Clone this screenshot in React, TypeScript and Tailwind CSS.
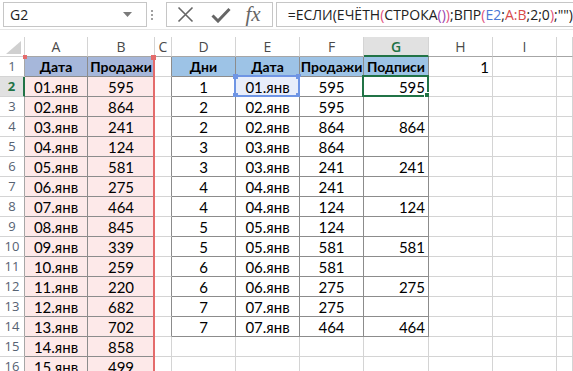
import React from "react";

type Col = { key: string; w: string };

const COLS: Col[] = [
  { key: "A", w: "w-[63px]" },
  { key: "B", w: "w-[67px]" },
  { key: "C", w: "w-[17px]" },
  { key: "D", w: "w-[64px]" },
  { key: "E", w: "w-[64px]" },
  { key: "F", w: "w-[64px]" },
  { key: "G", w: "w-[65px]" },
  { key: "H", w: "w-[64px]" },
  { key: "I", w: "w-[64px]" },
  { key: "J", w: "flex-1" },
];

const SALES = [595, 864, 241, 124, 581, 275, 464, 845, 339, 259, 220, 682, 702, 858, 499];
const dd = (i: number) => `${String(i).padStart(2, "0")}.янв`;

// вторая таблица: D..G, строки 2..14
const RIGHT: [number, string, number, string][] = [
  [1, dd(1), 595, "595"],
  [2, dd(2), 595, ""],
  [2, dd(2), 864, "864"],
  [3, dd(3), 864, ""],
  [3, dd(3), 241, "241"],
  [4, dd(4), 241, ""],
  [4, dd(4), 124, "124"],
  [5, dd(5), 124, ""],
  [5, dd(5), 581, "581"],
  [6, dd(6), 581, ""],
  [6, dd(6), 275, "275"],
  [7, dd(7), 275, ""],
  [7, dd(7), 464, "464"],
];

const ROWS = 16;

const inTable = (r: number, c: number) =>
  (c >= 0 && c <= 1 && r >= 1 && r <= ROWS) || (c >= 3 && c <= 6 && r >= 1 && r <= 14);

type Val = { text: string; bold?: boolean; align?: "center" | "right" };

const value = (r: number, c: number): Val => {
  if (r === 1) {
    const heads = ["Дата", "Продажи", "", "Дни", "Дата", "Продажи", "Подписи", "1"];
    if (c === 7) return { text: "1", align: "right" };
    return { text: heads[c] ?? "", bold: true };
  }
  if (c === 0) return { text: dd(r - 1) };
  if (c === 1) return { text: String(SALES[r - 2]) };
  const row = RIGHT[r - 2];
  if (row && c >= 3 && c <= 6) {
    const v = row[c - 3];
    return { text: String(v), align: c === 6 ? "right" : "center" };
  }
  return { text: "" };
};

const fillOf = (r: number, c: number) => {
  if (r === 1 && c <= 1) return "bg-[#a6b7da]";
  if (r === 1 && c >= 3 && c <= 6) return "bg-[#9dc3e6]";
  if (r === 2 && c === 4) return "bg-[#e8eefb]";
  if (c <= 1) return "bg-[#fde9e9]";
  return "bg-white";
};

const Cell = ({ r, c }: { r: number; c: number }) => {
  const v = value(r, c);
  const darkR = inTable(r, c) || inTable(r, c + 1);
  const darkB = inTable(r, c) || inTable(r + 1, c);
  return (
    <div
      className={`relative flex h-[20px] shrink-0 items-center border-r border-b px-[3px] pt-[1px] ${COLS[c].w} ${fillOf(r, c)} ${
        darkR ? "border-r-[#8c8c8c]" : "border-r-[#d4d4d4]"
      } ${darkB ? "border-b-[#8c8c8c]" : "border-b-[#d4d4d4]"} ${
        v.align === "right" ? "justify-end" : "justify-center"
      }`}
    >
      <span className={`whitespace-nowrap leading-none text-black ${v.bold ? "text-[14px] font-bold" : ""}`}>{v.text}</span>

      {/* диапазон E2 — синяя рамка */}
      {r === 2 && c === 4 && (
        <div className="absolute -left-[2px] -top-[2px] -right-[1px] -bottom-[1px] border-2 border-[#6f95e4]">
          <span className="absolute -left-[3px] -top-[3px] h-[5px] w-[5px] bg-[#6f95e4]" />
          <span className="absolute -right-[3px] -top-[3px] h-[5px] w-[5px] bg-[#6f95e4]" />
          <span className="absolute -left-[3px] -bottom-[3px] h-[5px] w-[5px] bg-[#6f95e4]" />
          <span className="absolute -right-[3px] -bottom-[3px] h-[5px] w-[5px] bg-[#6f95e4]" />
        </div>
      )}

      {/* активная ячейка G2 */}
      {r === 2 && c === 6 && (
        <div className="absolute -left-[2px] -top-[2px] -right-[1px] -bottom-[1px] border-2 border-[#217346]">
          <span className="absolute -right-[4px] -bottom-[4px] box-content h-[5px] w-[5px] border border-white bg-[#217346]" />
        </div>
      )}
    </div>
  );
};

const RowHeader = ({ r }: { r: number }) => {
  const sel = r === 2;
  return (
    <div
      className={`flex h-[20px] w-[25px] shrink-0 items-center justify-center border-b border-b-[#d4d4d4] text-[13px] font-['Open_Sans',sans-serif] ${
        sel
          ? "border-r-2 border-r-[#217346] bg-[#e1e1e1] font-bold text-[#217346]"
          : "border-r border-r-[#a6a6a6] bg-white text-[#566273]"
      }`}
    >
      {r}
    </div>
  );
};

const FormulaBar = () => (
  <div className="flex h-[30px] items-start border-b border-[#e6e6e6] pt-[2px]">
    {/* Name box */}
    <div className="ml-[3px] flex h-[25px] w-[149px] items-center justify-between border border-[#c6c6c6] pl-[6px] pr-[14px]">
      <span className="text-[14px] text-[#222] font-['Open_Sans',sans-serif]">G2</span>
      <svg width="9" height="5" viewBox="0 0 9 5">
        <polygon points="0,0 9,0 4.5,5" fill="#7a7a7a" />
      </svg>
    </div>
    <div className="flex h-[25px] w-[20px] flex-col items-start justify-center gap-[2px] pl-[4px]">
      <span className="h-[2px] w-[2px] bg-[#a0a0a0]" />
      <span className="h-[2px] w-[2px] bg-[#a0a0a0]" />
      <span className="h-[2px] w-[2px] bg-[#a0a0a0]" />
    </div>
    {/* Кнопки */}
    <div className="flex h-[25px] w-[110px] items-center border border-[#c6c6c6] pl-[10px]">
      <svg width="17" height="17" viewBox="0 0 17 17" className="mr-[17px]">
        <path d="M1.5 1.5 L15.5 15.5 M15.5 1.5 L1.5 15.5" stroke="#666" strokeWidth="1.6" fill="none" />
      </svg>
      <svg width="20" height="16" viewBox="0 0 20 16" className="mr-[14px]">
        <path d="M1.5 8.5 L7 14 L18.5 2" stroke="#666" strokeWidth="3" fill="none" />
      </svg>
      <span className="text-[21px] italic leading-none text-[#666] font-['Liberation_Serif',serif]">fx</span>
    </div>
    {/* Строка формул */}
    <div className="ml-[3px] flex h-[25px] flex-1 items-center whitespace-nowrap border border-r-0 border-[#c6c6c6] pl-[11px] text-[14px] text-[#222] font-['Open_Sans',sans-serif]">
      <span>=ЕСЛИ(ЕЧЁТН</span>
      <span className="text-[#e0507c]">(</span>
      <span>СТРОКА</span>
      <span className="text-[#9a3fb0]">()</span>
      <span className="text-[#e0507c]">)</span>
      <span>;ВПР</span>
      <span className="text-[#e0507c]">(</span>
      <span className="text-[#4a78d6]">E2</span>
      <span>;</span>
      <span className="text-[#d84a4a]">A:B</span>
      <span>;2;0</span>
      <span className="text-[#e0507c]">)</span>
      <span>;"")</span>
    </div>
  </div>
);

const ColumnHeaders = () => (
  <div className="flex h-[20px]">
    <div className="flex h-[20px] w-[25px] shrink-0 items-end justify-end border-r border-b border-[#d4d4d4] pb-[2px] pr-[3px]">
      <svg width="15" height="13" viewBox="0 0 15 13">
        <polygon points="15,0 15,13 0,13" fill="#d0d0d0" />
      </svg>
    </div>
    {COLS.map((c) => {
      const sel = c.key === "G";
      return (
        <div
          key={c.key}
          className={`flex h-[20px] shrink-0 items-center justify-center border-r border-r-[#d4d4d4] text-[14px] font-['Open_Sans',sans-serif] ${c.w} ${
            sel
              ? "border-b-2 border-b-[#217346] bg-[#e1e1e1] font-semibold text-[#217346]"
              : "border-b border-b-[#a6a6a6] bg-white text-[#4a4a4a]"
          }`}
        >
          {c.key === "J" ? "" : c.key}
        </div>
      );
    })}
  </div>
);

export default function App() {
  const rows = Array.from({ length: ROWS }, (_, i) => i + 1);
  return (
    <div className="h-[371px] w-[573px] overflow-hidden bg-white">
      <FormulaBar />
      <div className="h-[7px]" />
      <ColumnHeaders />
      <div className="relative text-[15px] font-['Lato',sans-serif]">
        {rows.map((r) => (
          <div key={r} className="flex">
            <RowHeader r={r} />
            {COLS.map((_, c) => (
              <Cell key={c} r={r} c={c} />
            ))}
          </div>
        ))}

        {/* ссылка A:B — красная рамка диапазона */}
        <div className="pointer-events-none absolute left-[153px] top-0 bottom-0 w-[2px] bg-[#e46c6c]" />
        <div className="pointer-events-none absolute left-[151px] -top-[2px] h-[5px] w-[5px] bg-[#e46c6c]" />
        <div className="pointer-events-none absolute left-[23px] -top-[2px] h-[4px] w-[4px] bg-[#e46c6c]" />
      </div>
    </div>
  );
}
